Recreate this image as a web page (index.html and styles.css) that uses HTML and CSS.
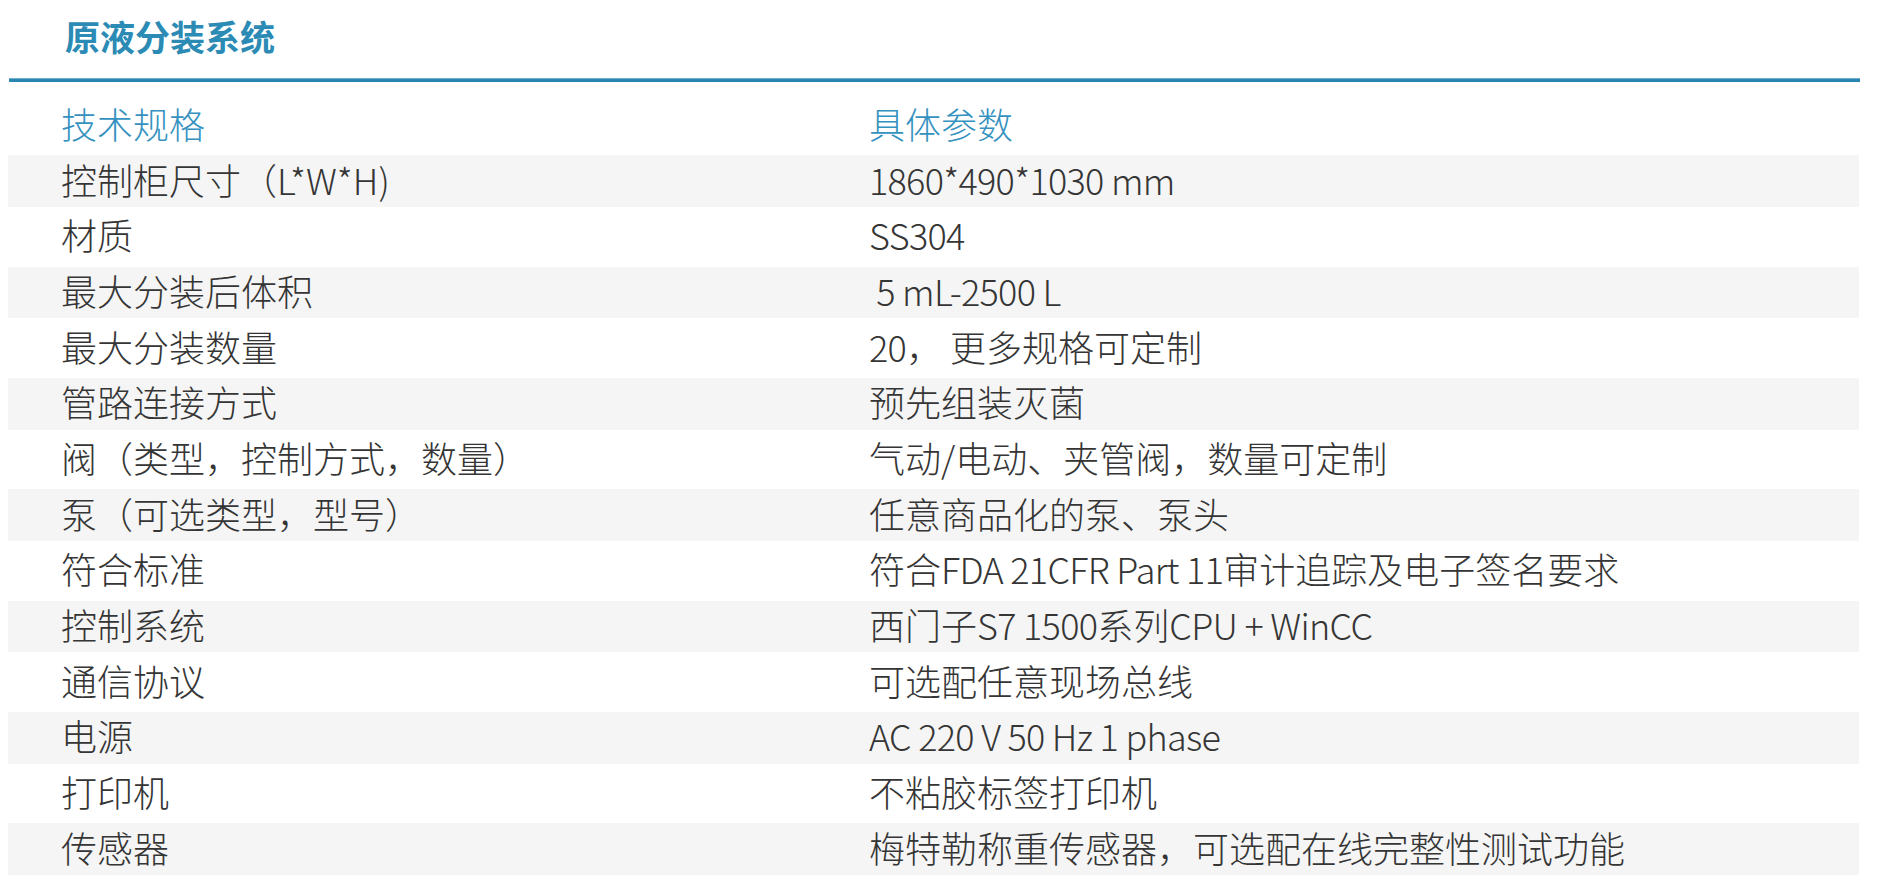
FILE: index.html
```html
<!DOCTYPE html>
<html lang="zh-CN">
<head>
<meta charset="utf-8">
<title>原液分装系统</title>
<link rel="stylesheet" href="styles.css">
</head>
<body>
<div class="page">
  <h1 class="title">原液分装系统</h1>
  <div class="rule"></div>
  <div class="spec">
    <div class="row head"><span>技术规格</span><span>具体参数</span></div>
    <div class="row alt"><span>控制柜尺寸（L*W*H)</span><span><i class="lat">1860*490*1030 mm</i></span></div>
    <div class="row"><span>材质</span><span><i class="lat">SS304</i></span></div>
    <div class="row alt"><span>最大分装后体积</span><span><i class="lat">&nbsp;5 mL-2500 L</i></span></div>
    <div class="row"><span>最大分装数量</span><span><i class="lat">20</i>， 更多规格可定制</span></div>
    <div class="row alt"><span>管路连接方式</span><span>预先组装灭菌</span></div>
    <div class="row"><span>阀（类型，控制方式，数量）</span><span>气动/电动、夹管阀，数量可定制</span></div>
    <div class="row alt"><span>泵（可选类型，型号）</span><span>任意商品化的泵、泵头</span></div>
    <div class="row"><span>符合标准</span><span>符合<i class="lat">FDA 21CFR Part 11</i>审计追踪及电子签名要求</span></div>
    <div class="row alt"><span>控制系统</span><span>西门子<i class="lat">S7 1500</i>系列<i class="lat">CPU + WinCC</i></span></div>
    <div class="row"><span>通信协议</span><span>可选配任意现场总线</span></div>
    <div class="row alt"><span>电源</span><span><i class="lat">AC 220 V 50 Hz 1 phase</i></span></div>
    <div class="row"><span>打印机</span><span>不粘胶标签打印机</span></div>
    <div class="row alt"><span>传感器</span><span>梅特勒称重传感器，可选配在线完整性测试功能</span></div>
  </div>
</div>
</body>
</html>
```
FILE: styles.css
```css
html, body {
  margin: 0;
  padding: 0;
  background: #ffffff;
}

body {
  font-family: "Noto Sans CJK SC", "Noto Sans", sans-serif;
  color: #353535;
}

.page {
  margin-left: 8px;
  width: 1852px;
}

.title {
  margin: 0;
  box-sizing: border-box;
  height: 79px;
  padding: 16px 0 0 57px;
  font-size: 35px;
  line-height: 40px;
  font-weight: 700;
  color: #2b8bb5;
}

.rule {
  height: 3px;
  margin-left: 1px;
  background: #2a86b0;
  box-shadow: 0 -1px 0 #6fb0d0;
}

.spec {
  margin-top: 15.67px;
  width: 1851px;
}

.row {
  display: grid;
  grid-template-columns: 808px 1fr;
  align-items: center;
  box-sizing: border-box;
  height: 55.67px;
  padding: 2px 0;
  font-size: 36px;
  line-height: 44px;
  font-weight: 300;
  white-space: nowrap;
}

.row > span {
  padding-left: 53px;
  padding-bottom: 5px;
}

.lat {
  font-style: normal;
  letter-spacing: -0.7px;
}

.row.alt {
  background: #f5f5f5;
  background-clip: content-box;
}

.row.head {
  color: #3592c0;
}
```
